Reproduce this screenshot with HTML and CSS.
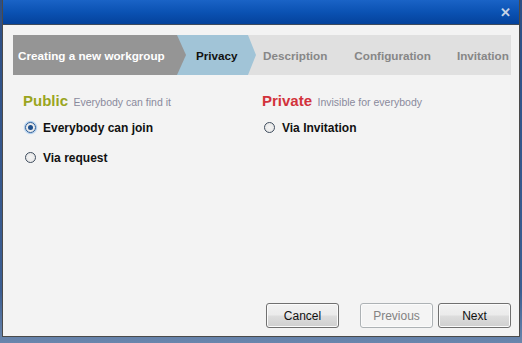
FILE: index.html
```html
<!DOCTYPE html>
<html>
<head>
  <link rel="stylesheet" href="styles.css">
</head>

<body>
  <div class="dialog">
    <div class="titlebar">
      <span class="close">&#x2715;</span>
    </div>

    <div class="body">
      <!-- Wizard steps -->
      <div class="steps">
        <div class="step step-done">Creating a new workgroup</div>
        <div class="step step-current">Privacy</div>
        <div class="step step-desc">Description</div>
        <div class="step step-conf">Configuration</div>
        <div class="step step-inv">Invitation</div>
      </div>

      <form class="privacy">
        <div class="col col-public">
          <h4><span class="kind public">Public</span> <span class="hint">Everybody can find it</span></h4>
          <label class="option"><input type="radio" name="privacy" checked> Everybody can join</label>
          <label class="option"><input type="radio" name="privacy"> Via request</label>
        </div>
        <div class="col col-private">
          <h4><span class="kind private">Private</span> <span class="hint">Invisible for everybody</span></h4>
          <label class="option"><input type="radio" name="privacy"> Via Invitation</label>
        </div>
      </form>

      <div class="buttons">
        <button type="button" class="btn btn-cancel">Cancel</button>
        <button type="button" class="btn btn-prev" disabled>Previous</button>
        <button type="button" class="btn">Next</button>
      </div>
    </div>
  </div>
</body>
</html>
```

FILE: styles.css
```css
html, body {
  margin: 0;
  height: 100%;
}

body {
  background: linear-gradient(180deg, #2d4f86 0%, #3c5e92 85%, #6a86ad 100%);
  font-family: "Liberation Sans", Arial, sans-serif;
  overflow: hidden;
}

.dialog {
  margin-left: 2px;
  width: 516px;
  height: 336px;
  border: 1px solid #4a4a4a;
  border-top: none;
  background-color: #f3f3f3;
  display: flex;
  flex-direction: column;
}

.titlebar {
  height: 24px;
  border-bottom: 1px solid #3d4a5c;
  background: linear-gradient(180deg, #1a63c6 0%, #0b52b3 50%, #04429c 100%);
  display: flex;
  justify-content: flex-end;
  align-items: center;
  padding-right: 8px;
}

.close {
  color: #c5d3e6;
  font-size: 13px;
  font-weight: bold;
}

.body {
  flex: 1;
  padding: 10px 8px 8px 10px;
  display: flex;
  flex-direction: column;
}

/* Wizard steps */
.steps {
  display: flex;
  height: 40px;
  background-color: #e0e0e0;
  font-size: 11.7px;
  font-weight: bold;
}

.step {
  display: flex;
  align-items: center;
  color: #878787;
  white-space: nowrap;
}

.step-done {
  position: relative;
  z-index: 2;
  width: 168px;
  padding-left: 5px;
  background-color: #959595;
  color: #fff;
  clip-path: polygon(0 0, calc(100% - 9px) 0, 100% 50%, calc(100% - 9px) 100%, 0 100%);
}

.step-current {
  position: relative;
  z-index: 1;
  margin-left: -9px;
  width: 60px;
  padding-left: 19px;
  background-color: #a1c4d7;
  color: #111;
  clip-path: polygon(0 0, calc(100% - 8px) 0, 100% 50%, calc(100% - 8px) 100%, 0 100%);
}

.step-desc { margin-left: 7px; }
.step-conf { margin-left: 27px; }
.step-inv { margin-left: 26px; }

/* Privacy options */
.privacy {
  display: flex;
  flex: 1;
  padding-top: 17px;
}

.col-public {
  width: 239px;
  padding-left: 10px;
}

h4 {
  margin: 0 0 10px 0;
  font-weight: normal;
  white-space: nowrap;
}

.kind {
  font-size: 15px;
  font-weight: bold;
}

.public { color: #9aa51d; }
.private { color: #d2323b; }

.hint {
  font-size: 10.5px;
  color: #8a8a9c;
  margin-left: 1px;
}

.option {
  display: flex;
  align-items: center;
  height: 15px;
  margin-bottom: 15px;
  font-size: 12px;
  font-weight: bold;
  color: #111;
}

input[type=radio] {
  appearance: none;
  -webkit-appearance: none;
  width: 11px;
  height: 11px;
  margin: 0 7px 0 2px;
  border: 1px solid #3f4d5e;
  border-radius: 50%;
  background: radial-gradient(circle, #f4f4f4 0%, #e4e4e4 100%);
  display: grid;
  place-items: center;
}

input[type=radio]:checked {
  border-color: #2a5c97;
  box-shadow: 0 0 1px 1px #9cc3eb;
}

input[type=radio]:checked::after {
  content: "";
  width: 5px;
  height: 5px;
  border-radius: 50%;
  background-color: #1e4f8c;
}

/* Buttons */
.buttons {
  display: flex;
  justify-content: flex-end;
  gap: 5px;
}

.btn {
  width: 73px;
  height: 25px;
  border: 1px solid #707070;
  border-radius: 3px;
  background: linear-gradient(180deg, #f2f2f2 0%, #ebebeb 48%, #dddddd 52%, #cfcfcf 100%);
  font-family: "Liberation Sans", Arial, sans-serif;
  font-size: 12px;
  color: #111;
  box-shadow: inset 0 0 0 1px #fbfbfb;
}

.btn-cancel { margin-right: 16px; }

.btn-prev {
  border-color: #adb2b5;
  background: #f4f4f4;
  color: #838383;
}
```
